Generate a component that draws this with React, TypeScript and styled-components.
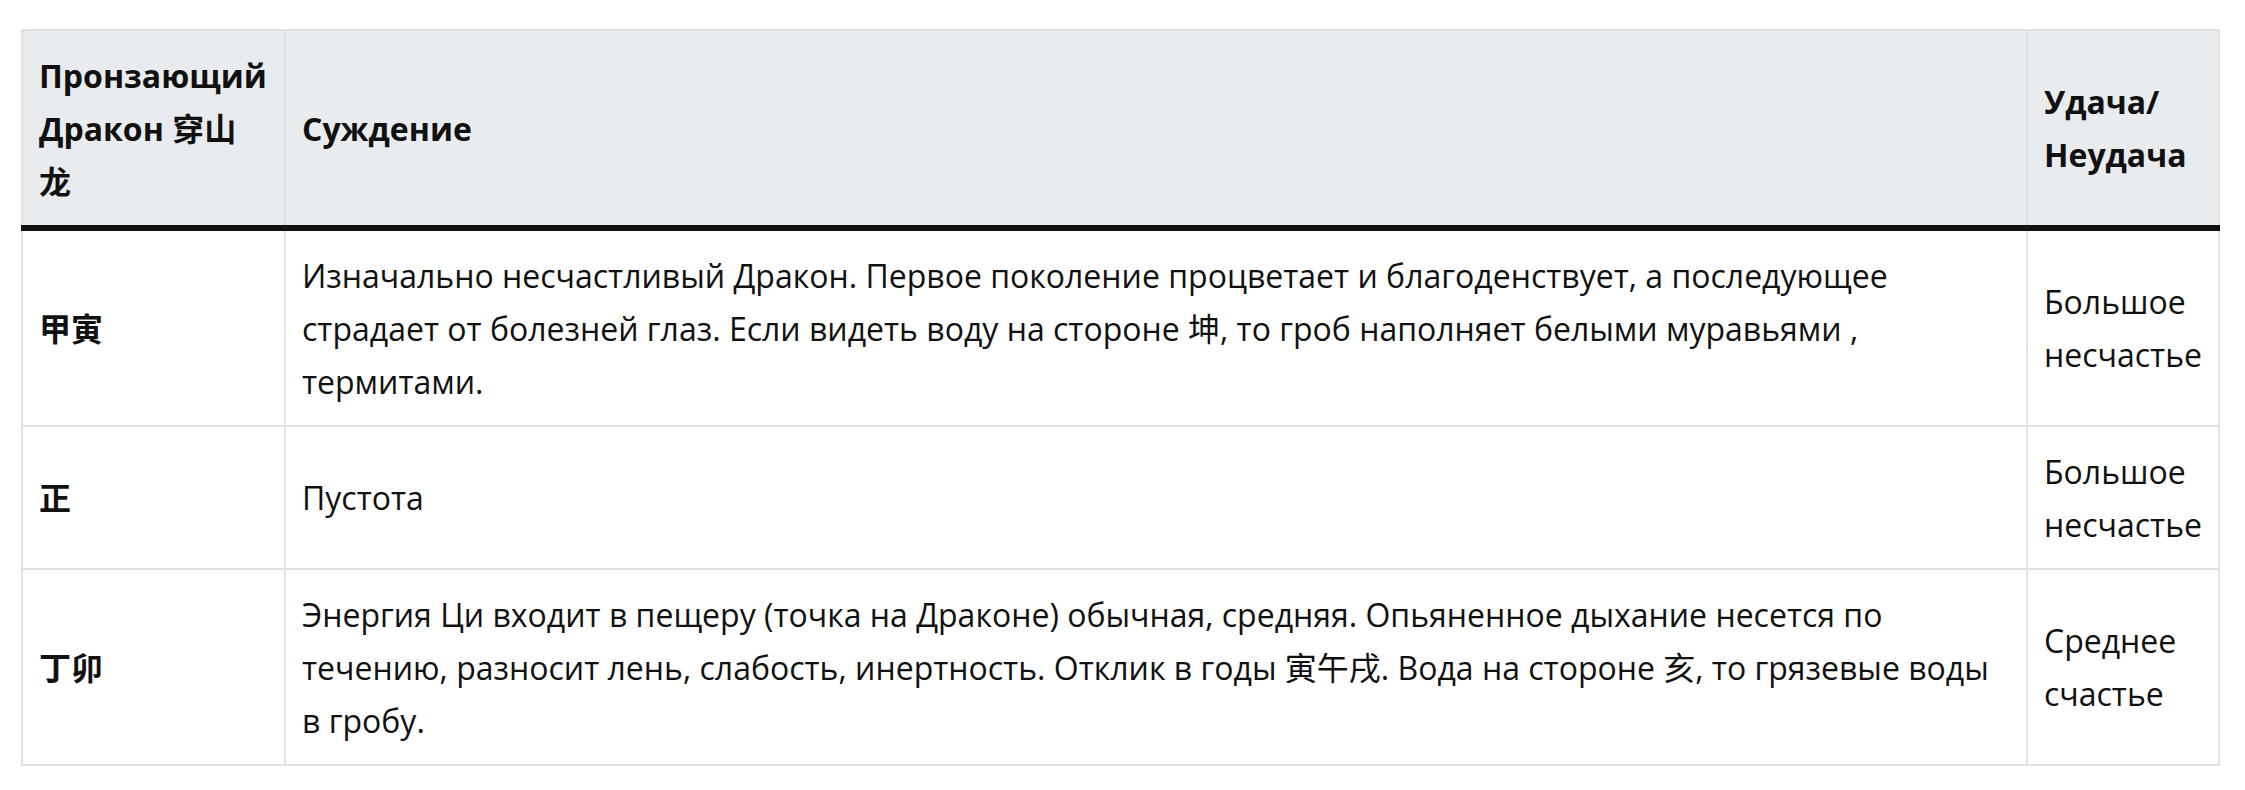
import styled, { createGlobalStyle } from 'styled-components';

const GlobalStyle = createGlobalStyle`
  body {
    margin: 0;
    background: #fff;
    font-family: 'Open Sans', 'Noto Sans CJK SC', sans-serif;
    color: #111;
  }
`;

const Page = styled.div`
  padding: 29px 25px 0 21px;
`;

const Table = styled.table`
  width: 100%;
  border-collapse: collapse;
  table-layout: fixed;
  font-size: 32px;
  line-height: 53px;
`;

const Col = styled.col<{ $width?: number }>`
  width: ${(p) => (p.$width ? `${p.$width}px` : 'auto')};
`;

const HeadCell = styled.th`
  background: #e9ecef;
  font-weight: 700;
  text-align: left;
  vertical-align: middle;
  padding: 17.5px 16px;
  border: 2px solid #dee2e6;
  border-bottom: 6px solid #111;
`;

const RowHead = styled.th`
  font-weight: 700;
  text-align: left;
  vertical-align: middle;
  padding: 17.5px 16px;
  border: 2px solid #dee2e6;
`;

const Cell = styled.td`
  vertical-align: middle;
  padding: 17.5px 16px;
  border: 2px solid #dee2e6;
`;

const rows = [
  {
    dragon: '甲寅',
    text: 'Изначально несчастливый Дракон. Первое поколение процветает и благоденствует, а последующее страдает от болезней глаз. Если видеть воду на стороне 坤, то гроб наполняет белыми муравьями , термитами.',
    luck: 'Большое несчастье',
  },
  {
    dragon: '正',
    text: 'Пустота',
    luck: 'Большое несчастье',
  },
  {
    dragon: '丁卯',
    text: 'Энергия Ци входит в пещеру (точка на Драконе) обычная, средняя. Опьяненное дыхание несется по течению, разносит лень, слабость, инертность. Отклик в годы 寅午戌. Вода на стороне 亥, то грязевые воды в гробу.',
    luck: 'Среднее счастье',
  },
];

const App = () => {
  return (
    <Page>
      <GlobalStyle />
      <Table>
        <colgroup>
          <Col $width={263} />
          <Col />
          <Col $width={192} />
        </colgroup>
        <thead>
          <tr>
            <HeadCell>Пронзающий Дракон 穿山龙</HeadCell>
            <HeadCell>Суждение</HeadCell>
            <HeadCell>Удача/ Неудача</HeadCell>
          </tr>
        </thead>
        <tbody>
          {rows.map((row) => (
            <tr key={row.dragon}>
              <RowHead>{row.dragon}</RowHead>
              <Cell>{row.text}</Cell>
              <Cell>{row.luck}</Cell>
            </tr>
          ))}
        </tbody>
      </Table>
    </Page>
  );
};

export default App;
